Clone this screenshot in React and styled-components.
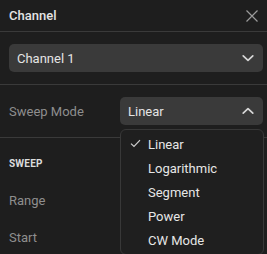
import React, { useState } from 'react';
import styled, { createGlobalStyle } from 'styled-components';

const Global = createGlobalStyle`
    html, body {
        margin: 0;
        padding: 0;
        background: #1e1e1e;
    }
    body {
        font-family: Roboto, "Noto Sans", sans-serif;
        overflow: hidden;
    }
`;

const Panel = styled.div`
    width: 267px;
    height: 254px;
    background: #1e1e1e;
    color: #e2e2e2;
    overflow: hidden;
`;

const Header = styled.div`
    height: 31px;
    display: flex;
    align-items: center;
    justify-content: space-between;
    padding: 0 8px 0 9px;
    border-bottom: 1px solid #3a3a3a;
`;

const Title = styled.span`
    font-size: 13px;
    font-weight: 500;
    color: #e4e4e4;
`;

const Close = styled.button`
    background: none;
    border: none;
    padding: 0;
    width: 14px;
    height: 14px;
    display: flex;
    cursor: pointer;
`;

const Section = styled.div`
    padding: 12px 4px 12px 9px;
    border-bottom: ${props => props.last ? 'none' : '1px solid #3a3a3a'};
    position: relative;
`;

const Row = styled.div`
    display: flex;
    align-items: center;
    height: ${props => props.h || 28}px;
`;

const Label = styled.span`
    width: 111px;
    font-size: 13px;
    color: #8e8e8e;
`;

const SelectBox = styled.div`
    flex: 1;
    height: 28px;
    background: #3a3a3a;
    border-radius: 5px;
    display: flex;
    align-items: center;
    justify-content: space-between;
    padding: 0 8px;
    font-size: 13px;
    color: #e4e4e4;
    position: relative;
`;

const GroupTitle = styled.div`
    font-size: 10px;
    font-weight: 700;
    letter-spacing: 0.2px;
    color: #dcdcdc;
    margin: 8px 0 19px;
`;

const Menu = styled.ul`
    position: absolute;
    top: 32px;
    left: 0;
    right: -1px;
    margin: 0;
    padding: 2px 0;
    list-style: none;
    background: #1f1f1f;
    border: 1px solid #383838;
    border-radius: 6px;
    z-index: 2;
`;

const Item = styled.li`
    height: 24px;
    display: flex;
    align-items: center;
    padding-left: 27px;
    position: relative;
    font-size: 13px;
    color: #e6e6e6;
`;

const Check = styled.span`
    position: absolute;
    left: 9px;
    top: 7px;
    display: flex;
`;

const Chevron = ({ up }) => (
    <svg width="14" height="14" viewBox="0 0 14 14">
        <path
            d={up ? 'M2.2 9.2 L7 4.6 L11.8 9.2' : 'M2.2 4.8 L7 9.4 L11.8 4.8'}
            fill="none"
            stroke="#d6d6d6"
            strokeWidth="1.7"
            strokeLinecap="round"
            strokeLinejoin="round"
        />
    </svg>
);

const modes = ['Linear', 'Logarithmic', 'Segment', 'Power', 'CW Mode'];

const App = () => {
    const [mode, setMode] = useState('Linear');
    return (
        <Panel>
            <Global />
            <Header>
                <Title>Channel</Title>
                <Close>
                    <svg width="14" height="14" viewBox="0 0 14 14">
                        <path d="M1.5 1.5 L12.5 12.5 M12.5 1.5 L1.5 12.5" stroke="#9a9a9a" strokeWidth="1.2" />
                    </svg>
                </Close>
            </Header>
            <Section>
                <SelectBox>
                    <span>Channel 1</span>
                    <Chevron />
                </SelectBox>
            </Section>
            <Section>
                <Row>
                    <Label>Sweep Mode</Label>
                    <SelectBox>
                        <span>{mode}</span>
                        <Chevron up />
                        <Menu>
                            {modes.map(m => (
                                <Item key={m} onClick={() => setMode(m)}>
                                    {m === mode && (
                                        <Check>
                                            <svg width="11" height="9" viewBox="0 0 11 9">
                                                <path d="M1 4.6 L4 7.5 L10 1.2" fill="none" stroke="#cfcfcf" strokeWidth="1.2" />
                                            </svg>
                                        </Check>
                                    )}
                                    {m}
                                </Item>
                            ))}
                        </Menu>
                    </SelectBox>
                </Row>
            </Section>
            <Section last>
                <GroupTitle>SWEEP</GroupTitle>
                <Row h={24}>
                    <Label>Range</Label>
                </Row>
                <Row h={50}>
                    <Label>Start</Label>
                </Row>
            </Section>
        </Panel>
    );
};

export default App;
